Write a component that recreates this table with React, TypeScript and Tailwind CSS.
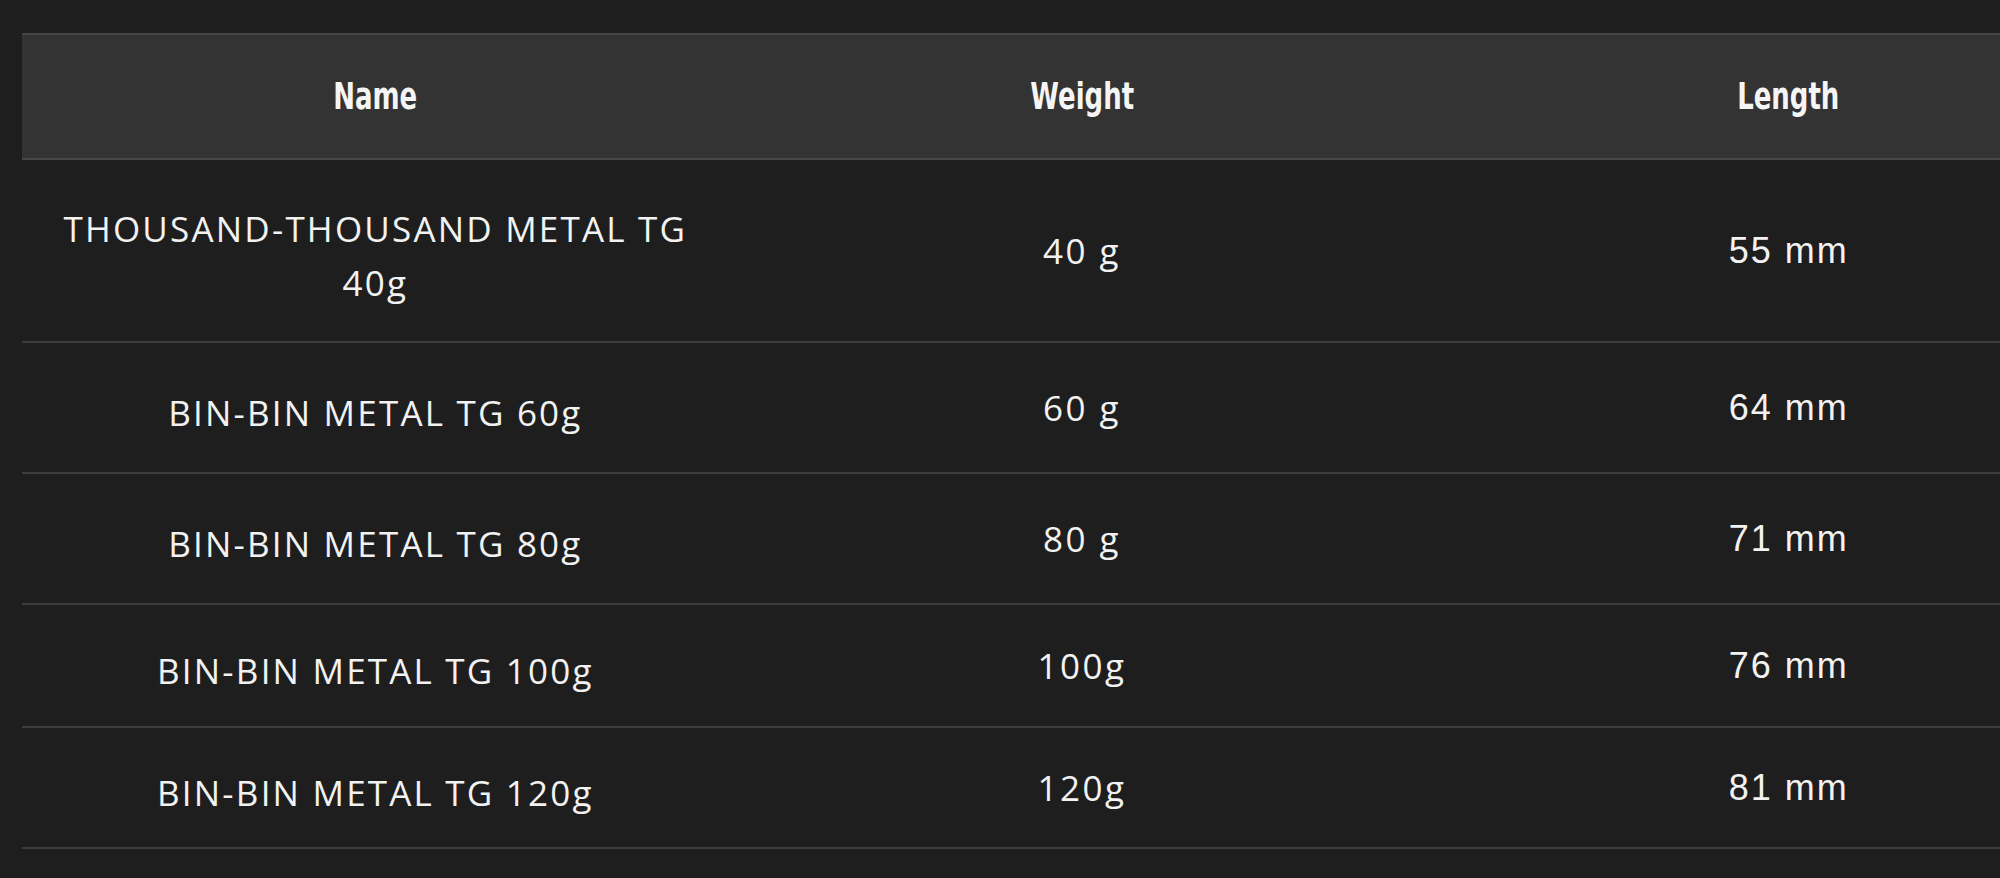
const rows = [
  { name: "THOUSAND-THOUSAND METAL TG 40g", weight: "40 g", length: "55 mm", h: "h-[183px]" },
  { name: "BIN-BIN METAL TG 60g", weight: "60 g", length: "64 mm", h: "h-[131px]" },
  { name: "BIN-BIN METAL TG 80g", weight: "80 g", length: "71 mm", h: "h-[131px]" },
  { name: "BIN-BIN METAL TG 100g", weight: "100g", length: "76 mm", h: "h-[123px]" },
  { name: "BIN-BIN METAL TG 120g", weight: "120g", length: "81 mm", h: "h-[121px]" },
];

const HeadCell = ({ label }: { label: string }) => (
  <th className="w-1/3 text-center">
    <span className="inline-block scale-x-[0.76] font-bold text-[38px] text-[#f5f5f5] font-['DejaVu_Sans_Condensed','DejaVu_Sans',sans-serif]">
      {label}
    </span>
  </th>
);

export default function App() {
  return (
    <div className="w-[2000px] h-[878px] overflow-hidden bg-[#1e1e1e] pt-[33px] pl-[22px]">
      <table className="w-[2120px] table-fixed border-collapse">
        <thead>
          <tr className="h-[125px] bg-[#333333] border-y-2 border-[#474747]">
            <HeadCell label="Name" />
            <HeadCell label="Weight" />
            <HeadCell label="Length" />
          </tr>
        </thead>
        <tbody>
          {rows.map((r) => (
            <tr key={r.name} className={`${r.h} border-b-2 border-[#3c3c3c]`}>
              <td className="px-[24px] pt-[10px] text-center text-[35px] leading-[54px] tracking-[2.2px] text-[#f2f2f2] font-['Open_Sans',sans-serif]">
                {r.name}
              </td>
              <td className="pt-[2px] text-center text-[35px] tracking-[2.5px] text-[#f2f2f2] font-['Open_Sans',sans-serif]">{r.weight}</td>
              <td className="text-center text-[36px] tracking-[2px] text-[#f2f2f2] font-['Liberation_Sans',Arial,sans-serif]">{r.length}</td>
            </tr>
          ))}
        </tbody>
      </table>
    </div>
  );
}
